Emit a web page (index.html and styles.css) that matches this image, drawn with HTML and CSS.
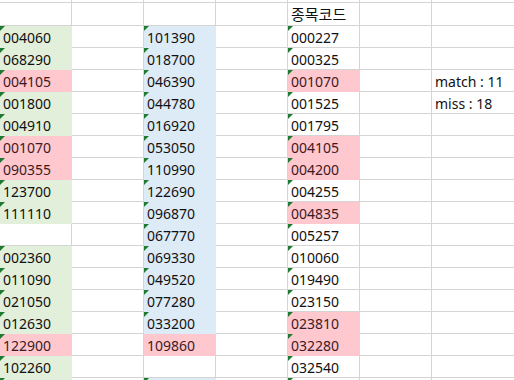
FILE: index.html
```html
<!DOCTYPE html>
<html lang="ko">
<head>
<meta charset="utf-8">
<title>Sheet</title>
<link rel="stylesheet" href="styles.css">
</head>
<body>
<div class="sheet">
  <div class="row top"><span class="c"></span><span class="c"></span><span class="c"></span><span class="c"></span><span class="c"></span><span class="c"></span><span class="c"></span></div>
  <div class="row first"><span class="c"></span><span class="c"></span><span class="c"></span><span class="c"></span><span class="c hd">종목코드</span><span class="c"></span><span class="c"></span></div>
  <div class="row"><span class="c g t">004060</span><span class="c"></span><span class="c b t">101390</span><span class="c"></span><span class="c t">000227</span><span class="c"></span><span class="c"></span></div>
  <div class="row"><span class="c g t">068290</span><span class="c"></span><span class="c b t">018700</span><span class="c"></span><span class="c t">000325</span><span class="c"></span><span class="c"></span></div>
  <div class="row"><span class="c p t">004105</span><span class="c"></span><span class="c b t">046390</span><span class="c"></span><span class="c p t">001070</span><span class="c"></span><span class="c">match : 11</span></div>
  <div class="row"><span class="c g t">001800</span><span class="c"></span><span class="c b t">044780</span><span class="c"></span><span class="c t">001525</span><span class="c"></span><span class="c">miss : 18</span></div>
  <div class="row"><span class="c g t">004910</span><span class="c"></span><span class="c b t">016920</span><span class="c"></span><span class="c t">001795</span><span class="c"></span><span class="c"></span></div>
  <div class="row"><span class="c p t">001070</span><span class="c"></span><span class="c b t">053050</span><span class="c"></span><span class="c p t">004105</span><span class="c"></span><span class="c"></span></div>
  <div class="row"><span class="c p t">090355</span><span class="c"></span><span class="c b t">110990</span><span class="c"></span><span class="c p t">004200</span><span class="c"></span><span class="c"></span></div>
  <div class="row"><span class="c g t">123700</span><span class="c"></span><span class="c b t">122690</span><span class="c"></span><span class="c t">004255</span><span class="c"></span><span class="c"></span></div>
  <div class="row"><span class="c g t">111110</span><span class="c"></span><span class="c b t">096870</span><span class="c"></span><span class="c p t">004835</span><span class="c"></span><span class="c"></span></div>
  <div class="row"><span class="c"></span><span class="c"></span><span class="c b t">067770</span><span class="c"></span><span class="c t">005257</span><span class="c"></span><span class="c"></span></div>
  <div class="row"><span class="c g t">002360</span><span class="c"></span><span class="c b t">069330</span><span class="c"></span><span class="c t">010060</span><span class="c"></span><span class="c"></span></div>
  <div class="row"><span class="c g t">011090</span><span class="c"></span><span class="c b t">049520</span><span class="c"></span><span class="c t">019490</span><span class="c"></span><span class="c"></span></div>
  <div class="row"><span class="c g t">021050</span><span class="c"></span><span class="c b t">077280</span><span class="c"></span><span class="c t">023150</span><span class="c"></span><span class="c"></span></div>
  <div class="row"><span class="c g t">012630</span><span class="c"></span><span class="c b t">033200</span><span class="c"></span><span class="c p t">023810</span><span class="c"></span><span class="c"></span></div>
  <div class="row"><span class="c p t">122900</span><span class="c"></span><span class="c p">109860</span><span class="c"></span><span class="c p t">032280</span><span class="c"></span><span class="c"></span></div>
  <div class="row"><span class="c g t">102260</span><span class="c"></span><span class="c"></span><span class="c"></span><span class="c t">032540</span><span class="c"></span><span class="c"></span></div>
  <div class="row"><span class="c g t"></span><span class="c"></span><span class="c b t"></span><span class="c"></span><span class="c t"></span><span class="c"></span><span class="c"></span></div>
</div>
</body>
</html>
```

FILE: styles.css
```css
html, body {
  margin: 0;
  padding: 0;
  background: #ffffff;
  overflow: hidden;
}

.sheet {
  width: 514px;
  height: 380px;
  overflow: hidden;
  display: flex;
  flex-direction: column;
}

.row {
  display: grid;
  grid-template-columns: repeat(6, 72px) 1fr;
  height: 22px;
  flex: none;
}

.row.top {
  height: 3px;
}

.row.first {
  height: 23px;
}

.c {
  position: relative;
  box-sizing: border-box;
  height: 100%;
  border-right: 1px solid #d4d4d4;
  border-bottom: 1px solid #d4d4d4;
  padding-left: 3px;
  display: flex;
  align-items: flex-end;
  font-family: "Noto Sans", "Noto Sans CJK KR", sans-serif;
  font-size: 14px;
  line-height: 19px;
  color: #111111;
  white-space: nowrap;
  overflow: hidden;
}

.c:last-child {
  border-right: none;
}

.hd {
  font-family: "Noto Sans CJK KR", sans-serif;
  font-size: 15px;
  line-height: 20px;
  padding-bottom: 1px;
}

.g {
  background: #e2efda;
  border-color: #e2efda;
}

.b {
  background: #ddebf7;
  border-color: #ddebf7;
}

.p {
  background: #ffc7ce;
  border-color: #ffc7ce;
  color: #3d1a1e;
}

.t::before {
  content: "";
  position: absolute;
  top: 0;
  left: 0;
  width: 0;
  height: 0;
  border-top: 5px solid #1e7a30;
  border-right: 5px solid transparent;
}
```
